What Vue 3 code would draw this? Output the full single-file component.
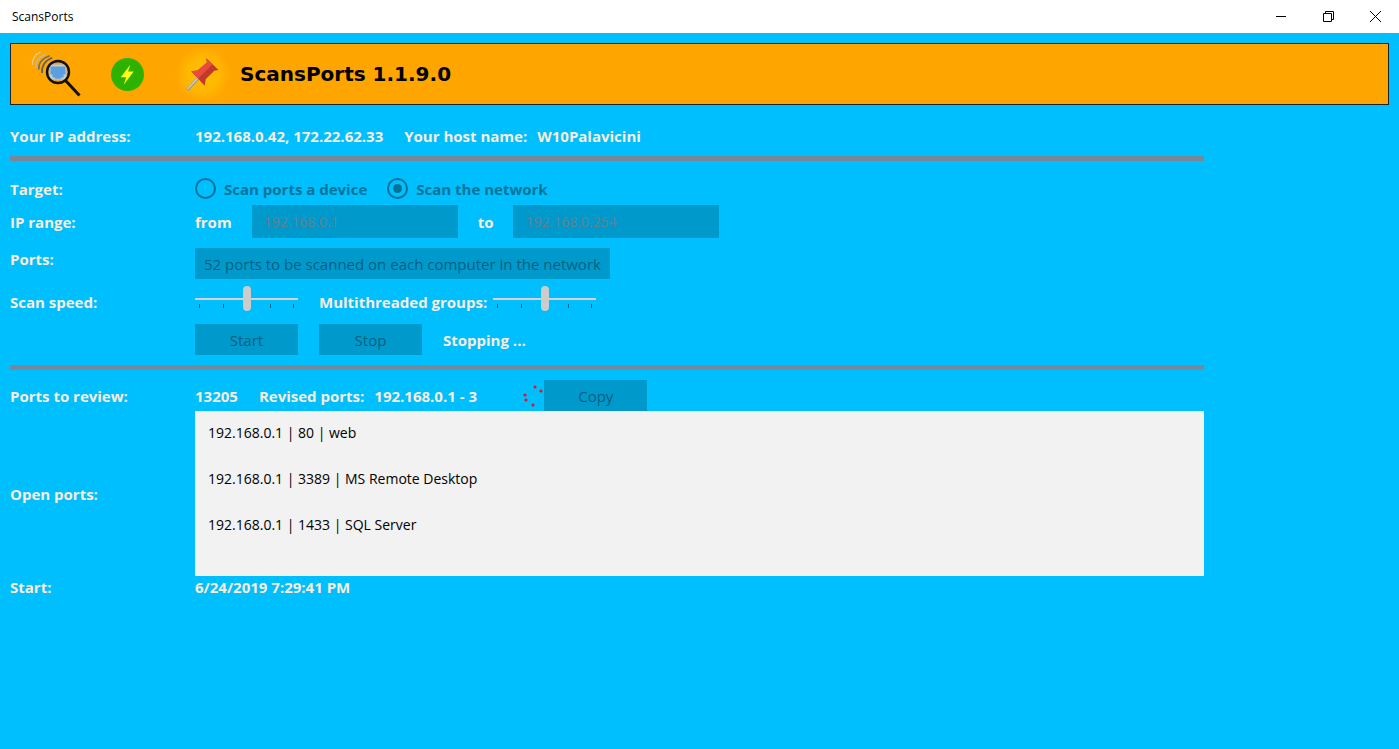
<template>
  <div class="window">
    <div class="title-bar">
      <span class="window-title">ScansPorts</span>
      <div class="window-controls">
        <button type="button" aria-label="Minimize">
          <svg width="11" height="11" viewBox="0 0 11 11"><path d="M0 5.5h10" /></svg>
        </button>
        <button type="button" aria-label="Restore">
          <svg width="11" height="11" viewBox="0 0 11 11">
            <path d="M.5 2.5h8v8h-8zM2.5 2.5v-2h8v8h-2" />
          </svg>
        </button>
        <button type="button" aria-label="Close">
          <svg width="11" height="11" viewBox="0 0 11 11"><path d="M0 0l11 11M11 0L0 11" /></svg>
        </button>
      </div>
    </div>

    <main class="page">
      <header class="banner">
        <div class="banner-icons">
          <svg width="50" height="48" viewBox="0 0 50 48">
            <g fill="none">
              <path d="M1.2 14.7C1.5 8 4 4.2 9.7 2" stroke="#e3cfa0" stroke-width="1.3" />
              <path d="M4.8 17.5C4.5 11 8.5 6.5 15 4" stroke="#c5b790" stroke-width="1.5" />
              <path d="M7.8 19.6C7.3 13 11.5 8.300 18.700 5.800" stroke="#77705a" stroke-width="1.600" />
              <path d="M11 23C10.500 15.500 14.500 10.300 21.300 7.700" stroke="#5f6058" stroke-width="1.700" />
            </g>
            <circle cx="27" cy="22" r="10.500" fill="#e3a23c" />
            <rect x="18.500" y="14.500" width="17" height="15" rx="1" fill="#c3c9d0" />
            <path d="M19.500 16.500h15v8h-2v3h-2.500v1.200h-6v-1.200h-2.500v-3h-2z" fill="#5b9fe0" />
            <circle cx="27" cy="22" r="11" fill="none" stroke="#111" stroke-width="2.400" />
            <path d="M34.500 30.500L48.500 45.500" stroke="#111" stroke-width="3" />
          </svg>
          <svg width="33" height="33" viewBox="0 0 33 33">
            <circle cx="16.500" cy="16.500" r="16.500" fill="#2db200" />
            <path d="M19.300 6.800L9.700 19.200h5.500l-2.500 7.600 10-13.300h-5.600z" fill="#ffff1a" />
          </svg>
          <svg width="57" height="54" viewBox="0 0 57 54">
            <defs>
              <radialGradient id="glow">
                <stop offset="0" stop-color="#ffc000" />
                <stop offset=".6" stop-color="#ffb700" />
                <stop offset="1" stop-color="#ffa500" />
              </radialGradient>
            </defs>
            <circle cx="29" cy="27" r="28" fill="url(#glow)" />
            <path d="M24 31.500L13.300 42.900" stroke="#8d979b" stroke-width="2.800" />
            <path d="M24 31L13.300 42.300" stroke="#cfd5d6" stroke-width="1.200" />
            <path
              d="M32.300 11.300L33 15.500 23.500 23.500 17.300 24.300 30.700 38.700 31.700 32.300 40.300 23.700 44.500 23z"
              fill="#c0392b"
            />
            <path d="M32.300 11.300L33 15.500 23.500 23.500 17.300 24.300 24 31.700 38.700 17.300z" fill="#e74c3c" />
          </svg>
        </div>
        <h1>ScansPorts 1.1.9.0</h1>
      </header>

      <section class="row row-address">
        <span class="caption">Your IP address:</span>
        <div class="content">
          <span>192.168.0.42, 172.22.62.33</span>
          <div class="pair">
            <span>Your host name:</span>
            <span>W10Palavicini</span>
          </div>
        </div>
      </section>

      <hr />

      <section class="settings">
        <div class="row row-field">
          <span class="caption">Target:</span>
          <div class="content">
            <label v-for="option in targets" :key="option.value" class="radio">
              <input v-model="target" type="radio" name="target" :value="option.value" disabled />
              {{ option.label }}
            </label>
          </div>
        </div>
        <div class="row row-field">
          <span class="caption">IP range:</span>
          <div class="content">
            <label for="range-from">from</label>
            <input id="range-from" v-model="rangeFrom" class="address" type="text" disabled />
            <label for="range-to">to</label>
            <input id="range-to" v-model="rangeTo" class="address" type="text" disabled />
          </div>
        </div>
        <div class="row row-ports">
          <span class="caption">Ports:</span>
          <div class="content">
            <button type="button" class="button" disabled>
              52 ports to be scanned on each computer in the network
            </button>
          </div>
        </div>
        <div class="row row-speed">
          <label class="caption" for="speed">Scan speed:</label>
          <div class="content">
            <div class="slider">
              <div class="ticks"><i v-for="n in 5" :key="n"></i></div>
              <input id="speed" v-model="speed" type="range" min="1" max="5" disabled />
            </div>
            <div class="pair pair-groups">
              <label for="groups">Multithreaded groups:</label>
              <div class="slider">
                <div class="ticks"><i v-for="n in 5" :key="n"></i></div>
                <input id="groups" v-model="groups" type="range" min="1" max="5" disabled />
              </div>
            </div>
          </div>
        </div>
        <div class="row row-actions">
          <span class="caption"></span>
          <div class="content">
            <button type="button" class="button action" disabled>Start</button>
            <button type="button" class="button action" disabled>Stop</button>
            <span>Stopping ...</span>
          </div>
        </div>
      </section>

      <hr />

      <section class="results">
        <div class="row">
          <span class="caption">Ports to review:</span>
          <div class="content">
            <span>13205</span>
            <div class="pair">
              <span>Revised ports:</span>
              <span class="progress">192.168.0.1 - 3</span>
              <svg class="spinner" width="22" height="22" viewBox="0 0 22 22">
                <circle v-for="(dot, i) in dots" :key="i" :cx="dot[0]" :cy="dot[1]" r="1.600" />
              </svg>
            </div>
            <button type="button" class="button action copy" disabled>Copy</button>
          </div>
        </div>
        <div class="row">
          <label class="caption" for="open-ports">Open ports:</label>
          <textarea id="open-ports" v-model="openPorts" readonly></textarea>
        </div>
        <div class="row row-start">
          <span class="caption">Start:</span>
          <span>6/24/2019 7:29:41 PM</span>
        </div>
      </section>
    </main>
  </div>
</template>

<script setup>
import { ref } from 'vue';

const targets = [
  { value: 'device', label: 'Scan ports a device' },
  { value: 'network', label: 'Scan the network' },
];

// Centres of the progress ring dots
const dots = [[13, 2], [19, 6], [3, 10], [4, 15], [11, 20]];

const target = ref('network');
const rangeFrom = ref('192.168.0.1');
const rangeTo = ref('192.168.0.254');
const speed = ref(3);
const groups = ref(3);

const openPorts = ref([
  '192.168.0.1 | 80 | web',
  '192.168.0.1 | 3389 | MS Remote Desktop',
  '192.168.0.1 | 1433 | SQL Server',
].join('\n\n'));
</script>

<style>
body {
  margin: 0;
  background: #00bfff;
}
</style>

<style scoped>
.window {
  min-height: 100vh;
  font: 700 15px/22px "Segoe UI", "Open Sans", "Noto Sans", sans-serif;
  color: #faebd7;
  background: #00bfff;
}

.title-bar {
  display: flex;
  justify-content: space-between;
  align-items: center;
  height: 33px;
  padding-left: 12px;
  background: #fff;
  color: #000;
}

.window-title {
  font-size: 12px;
  font-weight: 400;
}

.window-controls {
  display: flex;
  height: 100%;
}

.window-controls button {
  display: flex;
  align-items: center;
  justify-content: center;
  width: 47px;
  padding: 0;
  border: 0;
  background: none;
}

.window-controls svg {
  fill: none;
  stroke: #000;
}

.page {
  padding: 10px;
}

.banner {
  display: flex;
  align-items: center;
  gap: 9px;
  height: 62px;
  box-sizing: border-box;
  padding-left: 20px;
  border: 1px solid #222;
  background: #ffa500;
}

.banner-icons {
  display: flex;
  align-items: center;
  gap: 30px;
}

h1 {
  margin: 0;
  font: 700 20px/28px Verdana, "DejaVu Sans", sans-serif;
  color: #000;
}

.row {
  display: grid;
  grid-template-columns: 185px 1fr;
  align-items: center;
  margin-right: 185px;
}

.row-address {
  height: 40px;
  padding-top: 11px;
}

.content {
  display: flex;
  align-items: center;
  gap: 21px;
}

.pair {
  display: flex;
  align-items: center;
  gap: 10px;
}

.pair-groups {
  gap: 6px;
}

hr {
  height: 5px;
  margin: 0 185px 0 0;
  border: 0;
  background: #778899;
}

.settings {
  padding: 11px 0 10px;
}

.row-field {
  height: 33px;
}

.row-field .content {
  gap: 20px;
}

.row-ports {
  align-items: start;
  margin-top: 10px;
}

.row-speed {
  height: 31px;
  margin-top: 7px;
}

.row-actions {
  margin-top: 7px;
}

.radio {
  display: flex;
  align-items: center;
  gap: 8px;
  color: #007399;
}

.radio input {
  display: grid;
  place-content: center;
  appearance: none;
  width: 21px;
  height: 21px;
  margin: 0;
  border: 2px solid #007399;
  border-radius: 50%;
}

.radio input:checked::before {
  content: "";
  width: 9px;
  height: 9px;
  border-radius: 50%;
  background: #007399;
}

.address {
  width: 206px;
  height: 33px;
  box-sizing: border-box;
  padding: 0 12px;
  border: 0;
  background: #0099cc;
  color: #66808c;
  font: inherit;
  font-size: 14px;
  font-weight: 400;
}

.button {
  height: 31px;
  padding: 0 9px;
  border: 0;
  background: #0099cc;
  color: #006080;
  font: inherit;
  font-weight: 400;
}

.action {
  width: 103px;
}

.slider {
  position: relative;
  width: 103px;
  height: 31px;
}

.slider input {
  position: relative;
  display: block;
  appearance: none;
  width: 100%;
  height: 25px;
  margin: 0;
  background: linear-gradient(#dccfcc, #dccfcc) center / 100% 2px no-repeat;
}

.slider input::-webkit-slider-thumb {
  appearance: none;
  width: 8px;
  height: 25px;
  border-radius: 4px;
  background: #ccc;
}

.ticks {
  position: absolute;
  top: 18px;
  left: 4px;
  right: 4px;
  display: flex;
  justify-content: space-between;
}

.ticks i {
  width: 1px;
  height: 4px;
  background: #00607f;
}

.results {
  padding-top: 10px;
}

.progress {
  min-width: 138px;
}

.spinner {
  fill: #e81123;
}

.copy {
  margin-left: -21px;
}

textarea {
  display: block;
  height: 165px;
  box-sizing: border-box;
  padding: 10px 13px;
  border: 0;
  outline: 0;
  resize: none;
  background: #f2f2f2;
  color: #000;
  font: inherit;
  font-size: 14px;
  font-weight: 400;
  line-height: 23px;
}
</style>
